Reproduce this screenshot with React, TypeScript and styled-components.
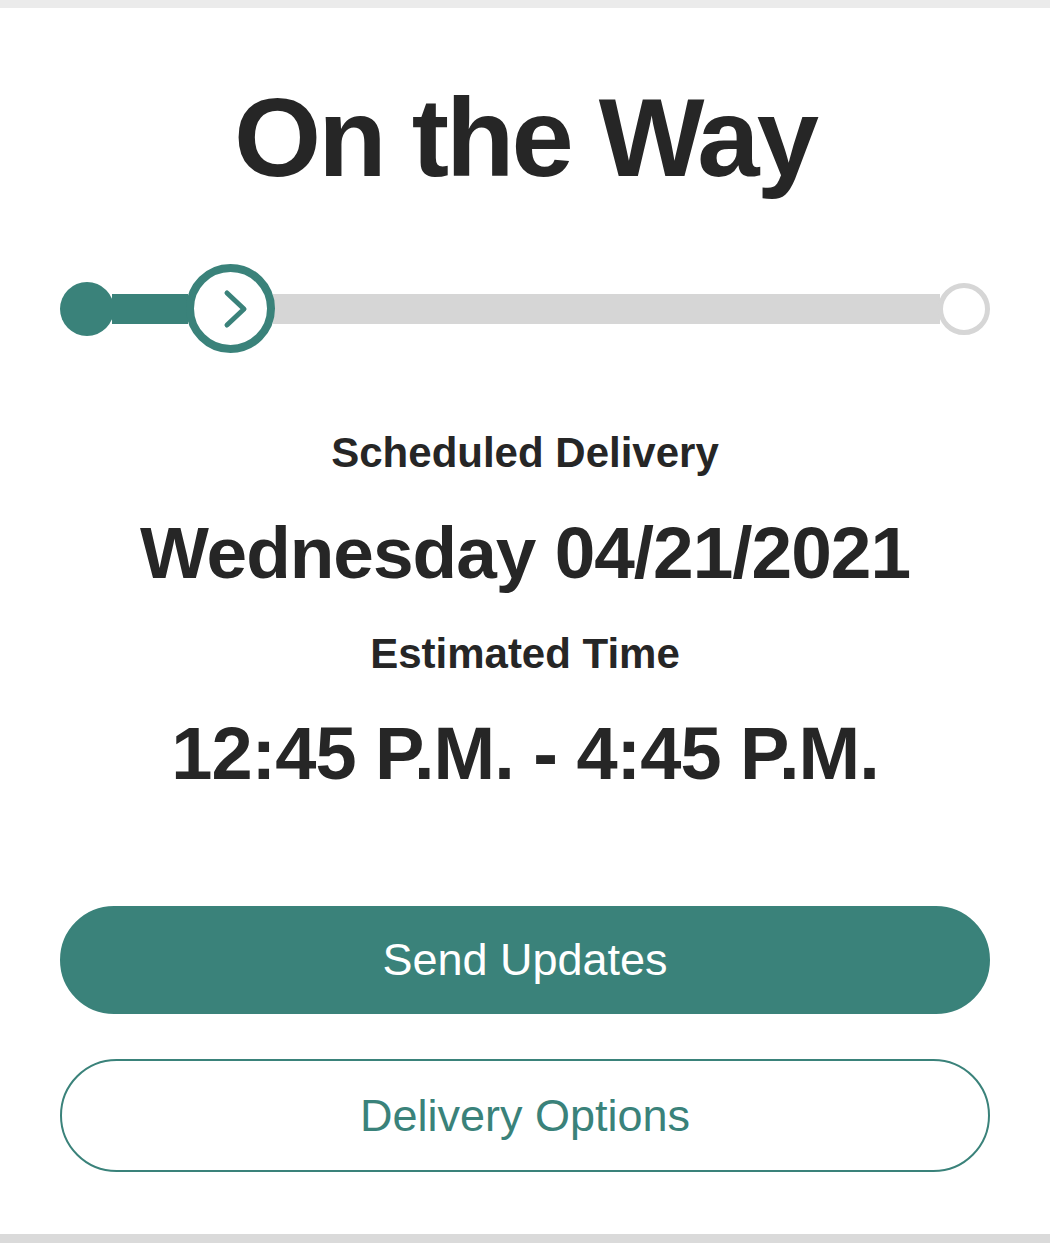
import React from "react";
import styled, { createGlobalStyle } from "styled-components";

const TEAL = "#3a827a";
const INK = "#262626";

const GlobalStyle = createGlobalStyle`
  html, body {
    margin: 0;
    padding: 0;
    background: #ffffff;
  }
  body {
    font-family: "Liberation Sans", Arial, Helvetica, sans-serif;
    color: ${INK};
  }
  * { box-sizing: border-box; }
`;

const Page = styled.div`
  width: 1050px;
  height: 1243px;
  display: flex;
  flex-direction: column;
`;

const Strip = styled.div<{ $h: number; $c: string }>`
  height: ${(p) => p.$h}px;
  background: ${(p) => p.$c};
  flex: none;
`;

const Card = styled.main`
  flex: 1;
  background: #ffffff;
  padding: 74px 60px 0;
  display: flex;
  flex-direction: column;
  align-items: stretch;
`;

const Title = styled.h1`
  margin: 0;
  font-size: 112px;
  line-height: 112px;
  font-weight: 700;
  letter-spacing: -3px;
  text-align: center;
`;

const Progress = styled.div`
  margin-top: 70px;
  height: 89px;
  display: flex;
  align-items: center;
`;

const StartDot = styled.div`
  width: 54px;
  height: 54px;
  border-radius: 50%;
  background: ${TEAL};
  flex: none;
`;

const Segment = styled.div<{ $done?: boolean; $grow?: boolean }>`
  height: 30px;
  background: ${(p) => (p.$done ? TEAL : "#d6d6d6")};
  flex: ${(p) => (p.$grow ? "1" : "none")};
  width: ${(p) => (p.$grow ? "auto" : "76px")};
  margin: 0 -2px;
`;

const CurrentStep = styled.div`
  width: 89px;
  height: 89px;
  border-radius: 50%;
  border: 8px solid ${TEAL};
  background: #ffffff;
  flex: none;
  position: relative;
  z-index: 1;
  display: flex;
`;

const EndStep = styled.div`
  width: 52px;
  height: 52px;
  border-radius: 50%;
  border: 5px solid #d6d6d6;
  background: #ffffff;
  flex: none;
  position: relative;
  z-index: 1;
`;

const Label = styled.div<{ $gap: number }>`
  margin-top: ${(p) => p.$gap}px;
  font-size: 42px;
  line-height: 42px;
  font-weight: 700;
  text-align: center;
`;

const Value = styled.div<{ $gap: number; $size: number; $ls: number }>`
  margin-top: ${(p) => p.$gap}px;
  font-size: ${(p) => p.$size}px;
  line-height: ${(p) => p.$size}px;
  letter-spacing: ${(p) => p.$ls}px;
  font-weight: 700;
  text-align: center;
`;

const Button = styled.button<{ $outline?: boolean; $gap: number; $h: number }>`
  margin-top: ${(p) => p.$gap}px;
  height: ${(p) => p.$h}px;
  width: 100%;
  border-radius: 60px;
  border: ${(p) => (p.$outline ? "2.5px" : "2px")} solid ${TEAL};
  background: ${(p) => (p.$outline ? "#ffffff" : TEAL)};
  color: ${(p) => (p.$outline ? TEAL : "#ffffff")};
  font-family: "Liberation Sans", Arial, Helvetica, sans-serif;
  font-size: 45px;
  font-weight: 400;
  display: flex;
  align-items: center;
  justify-content: center;
  padding: 0;
  cursor: pointer;
`;

export default function App() {
  return (
    <>
      <GlobalStyle />
      <Page>
        <Strip $h={8} $c="#ebebeb" />
        <Card>
          <Title>On the Way</Title>
          <Progress>
            <StartDot />
            <Segment $done />
            <CurrentStep>
              <svg width="73" height="73" viewBox="0 0 73 73">
                <polyline
                  points="33,21 50,37 33,53"
                  fill="none"
                  stroke={TEAL}
                  strokeWidth="5"
                  strokeLinecap="round"
                  strokeLinejoin="round"
                />
              </svg>
            </CurrentStep>
            <Segment $grow />
            <EndStep />
          </Progress>
          <Label $gap={79}>Scheduled Delivery</Label>
          <Value $gap={42} $size={73} $ls={-1}>
            Wednesday 04/21/2021
          </Value>
          <Label $gap={44}>Estimated Time</Label>
          <Value $gap={42} $size={74} $ls={-1}>
            12:45 P.M. - 4:45 P.M.
          </Value>
          <Button $gap={115} $h={108}>
            Send Updates
          </Button>
          <Button $outline $gap={45} $h={113}>
            Delivery Options
          </Button>
        </Card>
        <Strip $h={9} $c="#dadada" />
      </Page>
    </>
  );
}
